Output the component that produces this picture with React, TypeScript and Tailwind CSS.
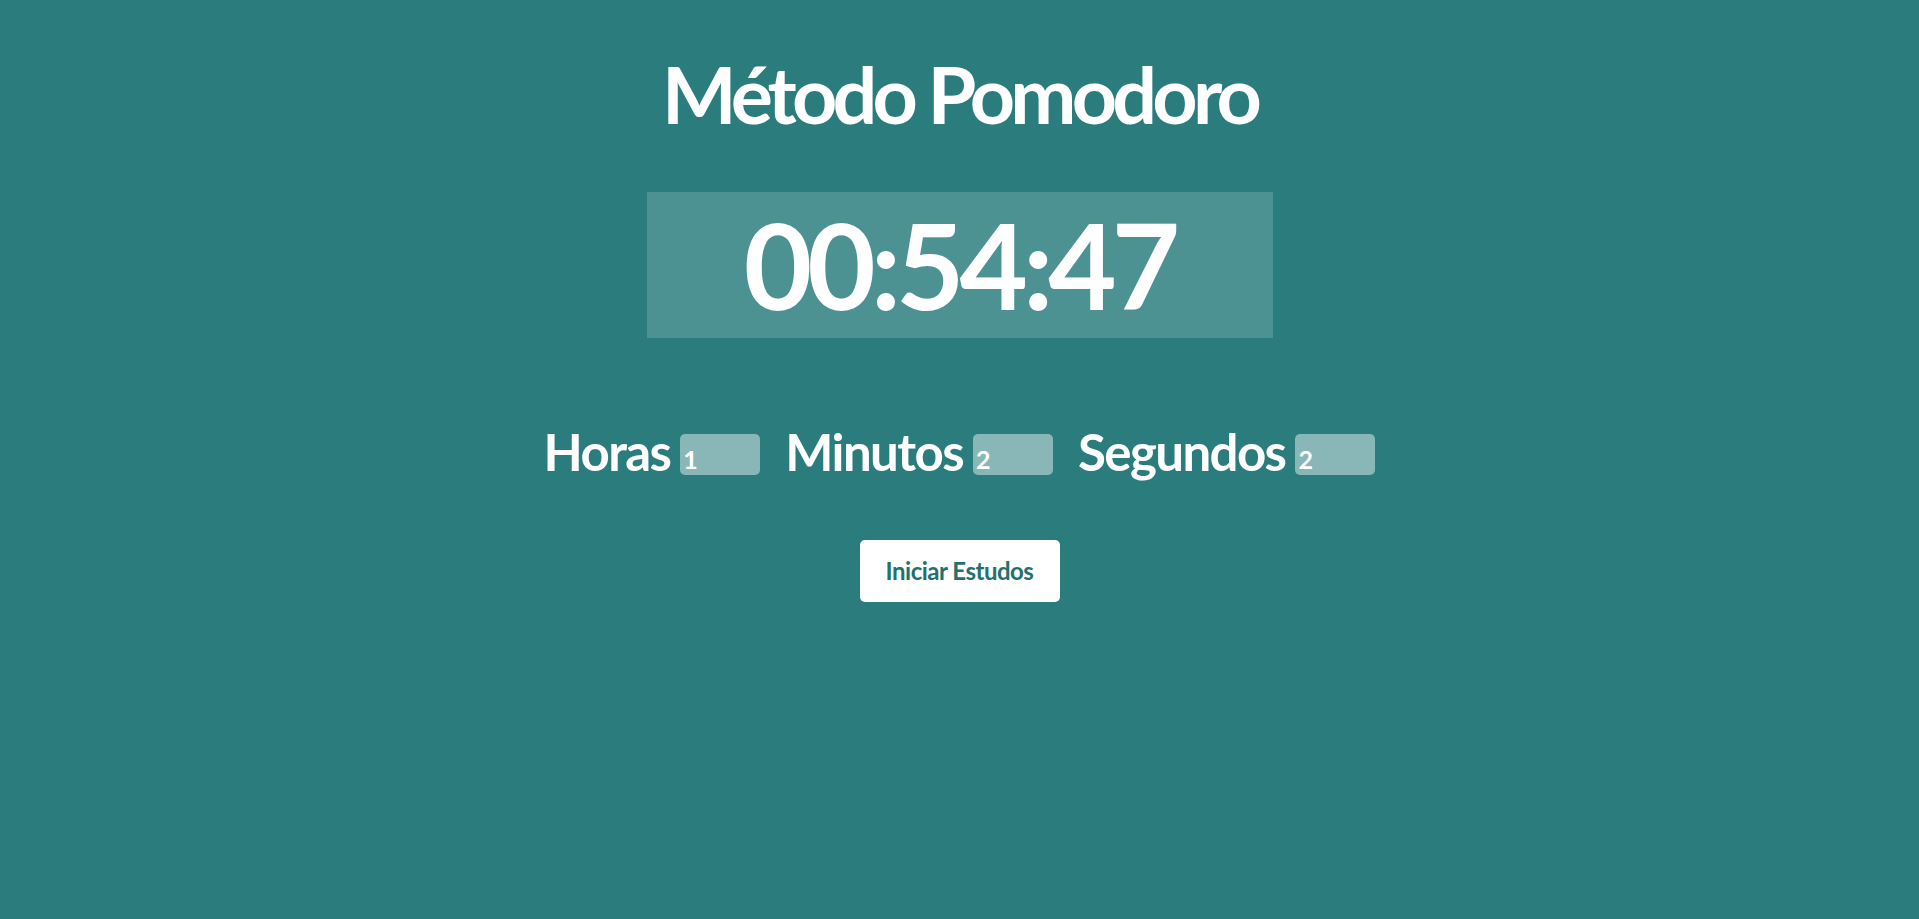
import { useState } from "react";

const fields = [
  { label: "Horas", value: "1" },
  { label: "Minutos", value: "2" },
  { label: "Segundos", value: "2" },
];

export default function App() {
  const [values, setValues] = useState(fields.map((f) => f.value));

  return (
    <div className="min-h-[919px] bg-[#2b7d7d] text-white font-['Lato','Noto_Sans',sans-serif] flex flex-col items-center">
      <h1 className="mt-[46px] text-[79px] leading-[96px] font-bold tracking-[-4.8px]">Método Pomodoro</h1>

      <div className="mt-[50px] w-[626px] h-[146px] bg-[#4c9292] flex items-center justify-center">
        <span className="text-[118px] leading-none font-bold tracking-[-5px]">00:54:47</span>
      </div>

      <div className="mt-[88px] flex items-center gap-[25px]">
        {fields.map((f, i) => (
          <label key={f.label} className="flex items-center gap-[10px]">
            <span className="text-[51px] leading-none font-bold tracking-[-1.6px]">{f.label}</span>
            <input
              value={values[i]}
              onChange={(e) => setValues(values.map((v, j) => (j === i ? e.target.value : v)))}
              className="mt-[6px] w-[80px] h-[41px] rounded-[5px] bg-[#89b7b7] px-[3px] pt-[8px] text-[25px] font-bold text-white outline-none"
            />
          </label>
        ))}
      </div>

      <button className="mt-[63px] w-[200px] h-[62px] rounded-[5px] bg-white text-[#24706f] text-[24px] font-bold tracking-[-0.5px]">
        Iniciar Estudos
      </button>
    </div>
  );
}
